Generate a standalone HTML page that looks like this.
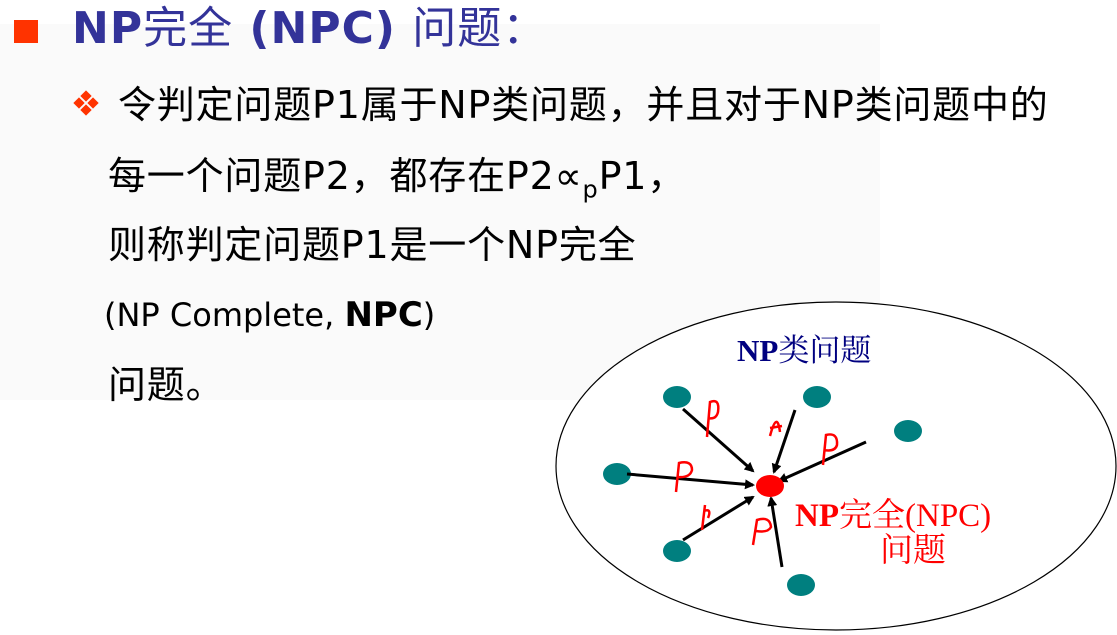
<!DOCTYPE html>
<html><head><meta charset="utf-8"><style>
body{margin:0;width:1117px;height:635px;overflow:hidden;background:#fff;position:relative;font-family:"DejaVu Sans","Noto Sans CJK SC",sans-serif}
.bg{position:absolute;left:0;top:24px;width:880px;height:376px;background:#fafafa}
.t{position:absolute;white-space:nowrap}
.title{left:72px;top:3px;font-size:44px;font-weight:bold;color:#333399;line-height:52px;letter-spacing:1px}
.title .c{font-weight:normal}
.sq{position:absolute;left:14px;top:20px;width:24px;height:23px;background:#ff3300}
.b{font-size:38px;color:#000;line-height:44px;letter-spacing:0.8px}
</style></head><body>
<div class="bg"></div>
<div class="sq"></div>
<div class="t title">NP<span class="c">完全</span> (NPC) <span class="c">问题：</span></div>
<svg style="position:absolute;left:72px;top:90px" width="30" height="30" viewBox="0 0 30 30">
<g fill="#ff3300"><rect x="10" y="2" width="8" height="8" transform="rotate(45 14 6)"/><rect x="3" y="9" width="8" height="8" transform="rotate(45 7 13)"/><rect x="17" y="9" width="8" height="8" transform="rotate(45 21 13)"/><rect x="10" y="16" width="8" height="8" transform="rotate(45 14 20)"/></g></svg>
<div class="t b" style="left:118px;top:83px">令判定问题P1属于NP类问题，并且对于NP类问题中的</div>
<div class="t b" style="left:108px;top:154px">每一个问题P2，都存在P2∝<sub style="font-size:24px">p</sub>P1，</div>
<div class="t b" style="left:108px;top:223px">则称判定问题P1是一个NP完全</div>
<div class="t" style="left:104px;top:294px;font-size:32px;line-height:42px">(NP Complete, <b style="font-size:34px">NPC</b>)</div>
<div class="t b" style="left:108px;top:363px">问题。</div>
<svg style="position:absolute;left:0;top:0" width="1117" height="635">
<defs><marker id="a" markerWidth="10" markerHeight="10" refX="8" refY="5" orient="auto" markerUnits="userSpaceOnUse"><path d="M0,0 L10,5 L0,10 z" fill="#000"/></marker></defs>
<ellipse cx="836" cy="466" rx="280" ry="164" fill="#fff" stroke="#000" stroke-width="1.2"/>
<g fill="#007f7f"><ellipse cx="677" cy="397" rx="14" ry="11"/><ellipse cx="817" cy="397" rx="14" ry="11"/><ellipse cx="908" cy="431" rx="14" ry="11"/><ellipse cx="617" cy="474" rx="14" ry="11"/><ellipse cx="677" cy="551" rx="14" ry="11"/><ellipse cx="801" cy="585" rx="14" ry="11"/></g>
<g stroke="#000" stroke-width="3" marker-end="url(#a)"><line x1="683" y1="409" x2="753" y2="471"/><line x1="795" y1="410" x2="774" y2="472"/><line x1="866" y1="442" x2="779" y2="481"/><line x1="627" y1="474" x2="753" y2="485"/><line x1="683" y1="540" x2="753" y2="497"/><line x1="782" y1="567" x2="771" y2="498"/></g>
<ellipse cx="770" cy="486" rx="14" ry="11" fill="#f00"/>
<g stroke="#f00" stroke-width="2.5" fill="none"><path d="M707,437 L710,402 Q720,398 718,412 Q716,420 708,418"/><path d="M770,436 Q777,410 780,432 M770,428 L782,426"/><path d="M823,465 L826,435 Q838,432 837,445 Q835,452 824,450"/><path d="M676,492 L679,463 Q692,460 692,470 Q690,478 678,477"/><path d="M702,530 L705,505 M704,511 Q712,508 708,518"/><path d="M753,545 L757,520 Q770,516 771,527 Q768,533 756,531"/></g>
<text x="737" y="361" font-family="Liberation Serif,'Noto Serif CJK SC',serif" font-weight="bold" font-size="31" fill="#000080">NP<tspan font-weight="normal">类问题</tspan></text>
<text x="795" y="526" font-family="Liberation Serif,'Noto Serif CJK SC',serif" font-weight="bold" font-size="33" fill="#f00">NP<tspan font-weight="normal">完全(NPC)</tspan></text>
<text x="880" y="561" font-family="Liberation Serif,'Noto Serif CJK SC',serif" font-size="33" fill="#f00">问题</text>
</svg>
</body></html>
